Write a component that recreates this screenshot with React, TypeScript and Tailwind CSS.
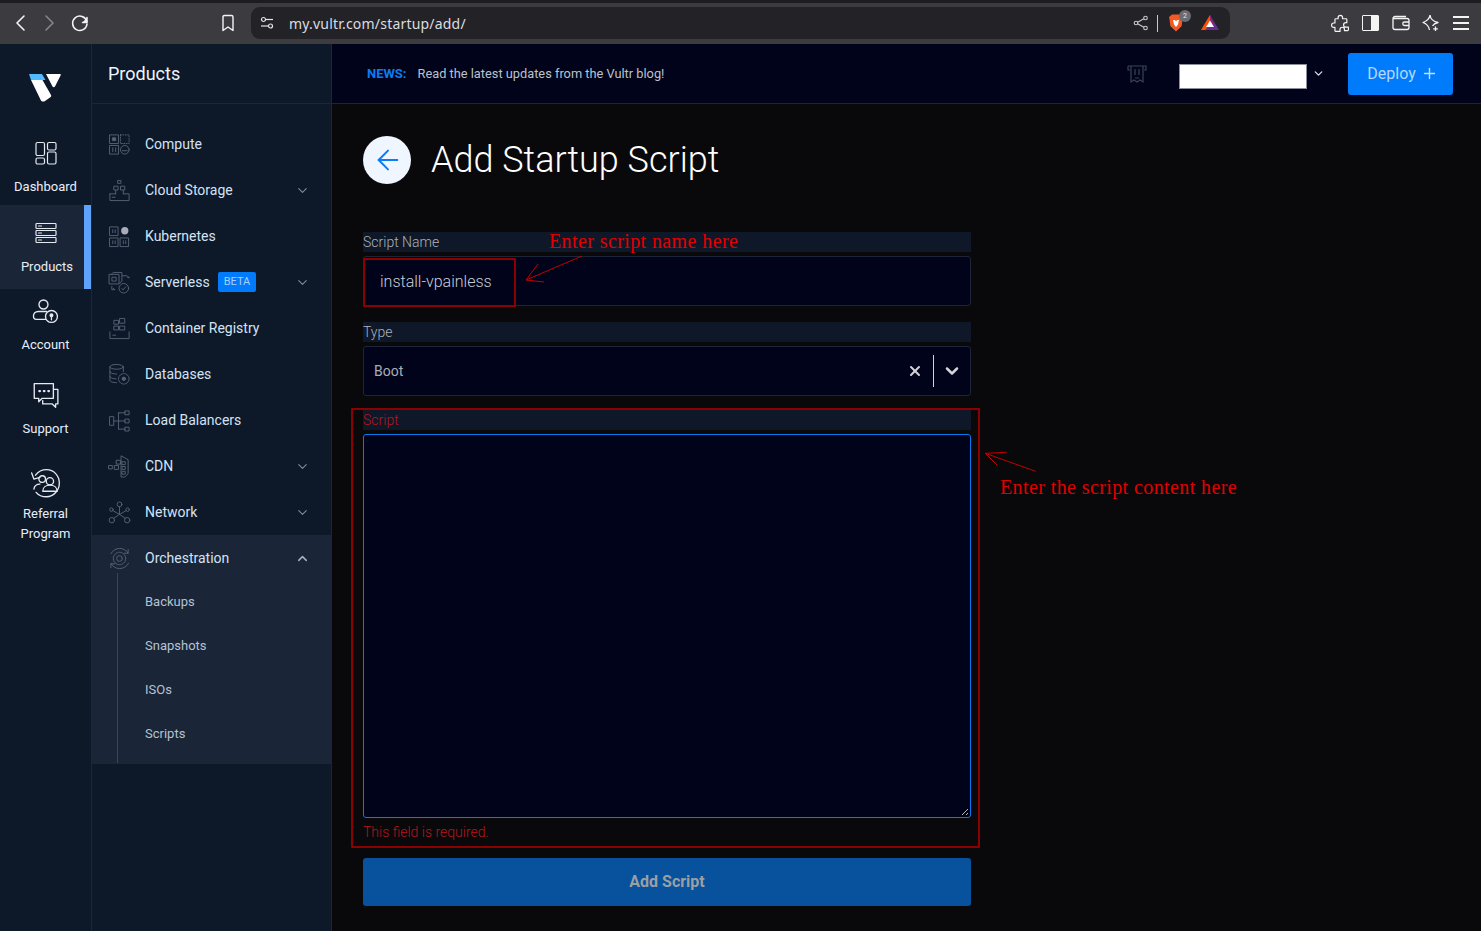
import type { ReactNode } from "react";
import { ArrowLeft, ChevronDown, ChevronUp, Plus, X } from "lucide-react";

const RAIL_STROKE = "#e5e9f0";
const NAV_STROKE = "#566173";

function Svg({ size, color, children, vb = 24, sw = 1.2 }: { size: number; color: string; children: ReactNode; vb?: number; sw?: number }) {
  return (
    <svg width={size} height={size} viewBox={`0 0 ${vb} ${vb}`} fill="none" stroke={color} strokeWidth={sw} strokeLinecap="round" strokeLinejoin="round">
      {children}
    </svg>
  );
}

function VultrLogo() {
  return (
    <svg width="33" height="29" viewBox="0 0 33 29">
      <path d="M1 1h13l3.500 6H3z" fill="#51b9ff" />
      <path d="M3 7h11.500l8.500 15c.4.8.2 1.500-.3 2l-5.700 4c-1.500 1-3.500.6-4.300-1z" fill="#fff" />
      <path d="M18 1h14c.6 0 1 .6.7 1.300L27 13.500c-.5 1-2 1-2.500 0z" fill="#fff" />
    </svg>
  );
}

const railIcons: Record<string, ReactNode> = {
  Dashboard: (
    <>
      <rect x="2" y="1.500" width="8.500" height="13" rx="1.500" />
      <rect x="13.500" y="1.500" width="8.500" height="7.500" rx="1.500" />
      <rect x="2" y="17" width="8.500" height="6" rx="1.500" />
      <rect x="13.500" y="11" width="8.500" height="12" rx="1.500" />
    </>
  ),
  Products: (
    <>
      <rect x="2" y="2.500" width="20" height="5" rx="0.800" />
      <rect x="2" y="9.500" width="20" height="5" rx="0.800" />
      <rect x="2" y="16.500" width="20" height="5" rx="0.800" />
      <path d="M4.500 5h3M4.500 12h3M4.500 19h3" />
    </>
  ),
  Account: (
    <>
      <circle cx="10.200" cy="5.800" r="4" />
      <path d="M13 12H5.500c-2.500 0-4.200 1.800-4.200 4 0 1.800 1 3 2.500 3H12" />
      <circle cx="17.300" cy="16.400" r="5.300" />
      <circle cx="17.300" cy="15.400" r="1.200" fill={RAIL_STROKE} />
      <path d="M17.300 16.400v3" />
    </>
  ),
  Support: (
    <>
      <path d="M2 1.500h17v13H9l-3 3v-3H2z" />
      <path d="M19.500 6.500h3.500v13h-2v3l-3-3H9.500v-3" />
      <path d="M6.500 8h.6M10.500 8h.6M14.500 8h.6" strokeWidth={2} />
    </>
  ),
  Referral: (
    <>
      <path d="M5 6.500C7.500 3 11 1.500 15 1.500c6.500 0 11.500 5.500 11.500 12S21.500 26 15 26c-4 0-7.500-1.500-9.500-4" />
      <path d="M1.500 4.500l2 5.500 5.500-1.500" />
      <circle cx="11" cy="10" r="3" />
      <circle cx="18" cy="12" r="3.300" />
      <path d="M3.500 19c.5-3 3-4.500 5.500-4.500M11.500 21c0-3.500 3-5.500 6.500-5.500s6.500 2 6.500 5.500z" />
    </>
  ),
};

function RailItem({ label, icon, active, iconSize, pad, labelGap, vb }: { label: ReactNode; icon: string; active?: boolean; iconSize: number; pad: string; labelGap: string; vb?: number }) {
  return (
    <div className={`relative flex flex-col items-center ${pad} ${active ? "bg-[#1a2537]" : ""}`}>
      <Svg size={iconSize} color={RAIL_STROKE} vb={vb}>
        {railIcons[icon]}
      </Svg>
      <div className={`text-center text-[13px] leading-[20px] text-[#e8eef7] ${labelGap} ${active ? "pl-[3px]" : ""}`}>{label}</div>
      {active ? <div className="absolute right-0 top-0 h-full w-[7px] bg-[#5da3fc]" /> : null}
    </div>
  );
}

const navIcons: Record<string, ReactNode> = {
  Compute: (
    <>
      <rect x="2" y="2" width="9" height="9" />
      <rect x="13" y="2" width="9" height="9" strokeDasharray="1 1.500" />
      <rect x="2" y="13" width="9" height="9" />
      <circle cx="17.500" cy="17.500" r="4.500" />
      <rect x="5" y="5" width="3" height="3" fill={NAV_STROKE} />
      <path d="M5 15.500v4M8 15.500v4M15 18.500h5" />
    </>
  ),
  Storage: (
    <>
      <rect x="10.500" y="1.500" width="3" height="3" />
      <rect x="6.500" y="7.500" width="4" height="4" />
      <rect x="13.500" y="7.500" width="4" height="4" />
      <path d="M2 15.500h6M16 15.500h6v7H2v-7" />
      <path d="M8 12v3.500M16 12v3.500M4.500 19h3" />
    </>
  ),
  Kubernetes: (
    <>
      <rect x="2" y="2" width="8.500" height="9" />
      <rect x="2" y="13.500" width="8.500" height="9" />
      <rect x="13" y="13.500" width="8.500" height="9" />
      <path d="M5 5v3M7.500 5v3M5 16.500v3M7.500 16.500v3M16 16.500v3M18.500 16.500v3" />
      <circle cx="17.500" cy="6" r="3.800" fill="#a6adb9" stroke="none" />
    </>
  ),
  Serverless: (
    <>
      <rect x="1.500" y="3.500" width="10" height="10" />
      <path d="M3.500 3.500l2-2h9v9l-2.500 2.500M4.500 6.500h4v4h-4z" />
      <path d="M15 5h5l2 2M22 7l-1.500-.2M4 16v3.500h3M7 19.500l-1.500-1.500" />
      <circle cx="16.500" cy="18" r="5" />
      <path d="M14.500 18.500l1.500 1 2.500-3" />
    </>
  ),
  Registry: (
    <>
      <rect x="12.500" y="1.500" width="5" height="5" />
      <rect x="6.500" y="3.500" width="4.500" height="4" />
      <rect x="6.500" y="9.500" width="4.500" height="4" />
      <rect x="12.500" y="9.500" width="5" height="4" />
      <path d="M2 15.500v7h20v-7" />
      <path d="M5 19h3" />
    </>
  ),
  Databases: (
    <>
      <ellipse cx="9" cy="4" rx="7" ry="2.500" />
      <path d="M2 4v14c0 1.500 3 2.500 7 2.500M16 4v5M2 9c0 1.500 3 2.500 7 2.500M2 14c0 1.500 3 2.500 6.500 2.500" />
      <circle cx="16.500" cy="16.500" r="5.500" strokeDasharray="3 1" />
      <circle cx="16.500" cy="16.500" r="1.800" fill={NAV_STROKE} />
    </>
  ),
  Balancers: (
    <>
      <rect x="2" y="8" width="4" height="9" />
      <rect x="18" y="2" width="4" height="4" />
      <rect x="18" y="10.500" width="4" height="4" />
      <rect x="18" y="19" width="4" height="4" />
      <path d="M6 12.500h12M11 4v17M11 4h7M11 21h7" />
    </>
  ),
  CDN: (
    <>
      <path d="M14 1l7 4v14.500L17.500 23H14z" />
      <rect x="9" y="5.500" width="4" height="4" />
      <rect x="1" y="11" width="3.500" height="3.500" />
      <rect x="7" y="11" width="4" height="4" />
      <rect x="15" y="7" width="3" height="3" />
      <rect x="15" y="12" width="3" height="3" />
      <rect x="15" y="17" width="3" height="3" />
    </>
  ),
  Network: (
    <>
      <circle cx="12" cy="3.500" r="2.500" />
      <circle cx="3.500" cy="9" r="1.800" />
      <circle cx="20.500" cy="9" r="1.800" />
      <circle cx="4" cy="20" r="2.800" />
      <circle cx="20" cy="20" r="2.800" />
      <path d="M12 6v8M5 10l7 4 7-4M6 18l6-4 6 4" />
    </>
  ),
  Orchestration: (
    <>
      <path d="M3 7C5 3.500 8.500 1.500 12 1.500c4 0 7 1.800 9 5M21.500 17c-2 3.500-5.500 5.500-9.500 5.500s-7-2-9-5.500" />
      <path d="M21 2.500v4h-4M3 21.500v-4h4" />
      <circle cx="12" cy="12" r="6.500" strokeDasharray="3 1" />
      <circle cx="12" cy="12" r="3" />
    </>
  ),
};

function NavItem({ label, icon, chevron, beta, open }: { label: string; icon: string; chevron?: boolean; beta?: boolean; open?: boolean }) {
  return (
    <div className={`flex h-[46px] items-center pl-[16px] pr-[21px] ${open ? "bg-[#1a2537]" : ""}`}>
      <div className="w-[37px]">
        <Svg size={23} color={NAV_STROKE} sw={1}>
          {navIcons[icon]}
        </Svg>
      </div>
      <span className="text-[14px] text-[#d3e3f5]">{label}</span>
      {beta ? <span className="ml-[8px] flex h-[20px] items-center rounded-[2px] bg-[#007bfc] px-[6px] text-[11px] text-[#a6cffb]">BETA</span> : null}
      <div className="flex-1" />
      {chevron ? <ChevronDown size={15} color="#7f8a9b" strokeWidth={1.800} /> : null}
      {open ? <ChevronUp size={15} color="#a5aebb" strokeWidth={2.500} /> : null}
    </div>
  );
}

function FieldLabel({ children, error }: { children: ReactNode; error?: boolean }) {
  return <div className={`h-[20px] bg-[#0e1829] text-[14px] font-light leading-[20px] ${error ? "text-[#b5161e]" : "text-[#aeb3ba]"}`}>{children}</div>;
}

export default function App() {
  return (
    <div className="relative flex h-[931px] w-[1481px] flex-col overflow-hidden bg-[#09090b] font-['Roboto',sans-serif]">
      {/* browser chrome */}
      <div className="h-[44px] border-t-[3px] border-[#1d1c20] bg-[#3c3b40]">
        <div className="flex h-[40px] items-center">
          <svg className="ml-[14px]" width="12" height="18" viewBox="0 0 12 18" fill="none" stroke="#f4f4f5" strokeWidth="1.600" strokeLinecap="round" strokeLinejoin="round"><path d="M10 2L3 9l7 7" /></svg>
          <svg className="ml-[18px]" width="12" height="18" viewBox="0 0 12 18" fill="none" stroke="#85858a" strokeWidth="1.600" strokeLinecap="round" strokeLinejoin="round"><path d="M2 2l7 7-7 7" /></svg>
          <svg className="ml-[14px]" width="20" height="20" viewBox="0 0 20 20" fill="none" stroke="#f4f4f5" strokeWidth="1.500" strokeLinecap="round"><path d="M16.800 8.500A7.200 7.200 0 1 0 17 11" /><path d="M17 4.500v5h-4.500" fill="#f4f4f5" /></svg>
          <svg className="ml-[131px]" width="14" height="18" viewBox="0 0 14 18" fill="none" stroke="#f4f4f5" strokeWidth="1.400" strokeLinejoin="round"><path d="M2 3c0-1 .6-1.500 1.500-1.500h7c.9 0 1.500.5 1.500 1.500v13.500l-5-3.500-5 3.500z" /></svg>
          <div className="ml-[16px] flex h-[32px] w-[979px] items-center rounded-[9px] bg-[#232327]">
            <svg className="ml-[9px]" width="14" height="14" viewBox="0 0 14 14" fill="none" stroke="#e4e4e7" strokeWidth="1.200"><circle cx="3.500" cy="3.500" r="2" /><path d="M6 3.500h7" /><circle cx="10.500" cy="10" r="2" /><path d="M1 10h7" /></svg>
            <span className="ml-[15px] font-['Noto_Sans',sans-serif] text-[14px] tracking-[0.2px] text-[#dcdce0]">my.vultr.com/startup/add/</span>
            <div className="flex-1" />
            <svg width="16" height="16" viewBox="0 0 16 16" fill="none" stroke="#c9c9cd" strokeWidth="1.100"><circle cx="12.500" cy="3" r="1.800" /><circle cx="12.500" cy="13" r="1.800" /><circle cx="3" cy="8" r="1.800" /><path d="M4.600 7.200l6.300-3.400M4.600 8.800l6.300 3.400" /></svg>
            <div className="ml-[8px] h-[17px] w-px bg-[#c9c9cd]" />
            <div className="relative ml-[10px]">
              <svg width="16" height="18" viewBox="0 0 16 18"><path d="M1 3l3-2.500h8L15 3l-.5 2-.8 7L8 17.500 2.300 12l-.8-7z" fill="#f15a22" /><path d="M5 6h2l1 1.500L9 6h2l-1 4.500L8 13l-2-2.500z" fill="#fff" /></svg>
              <div className="absolute -right-[7px] -top-[4px] flex h-[12px] w-[12px] items-center justify-center rounded-full bg-[#6b6b73] text-[7px] text-[#e4e4e7]">2</div>
            </div>
            <svg className="ml-[17px] mr-[11px]" width="18" height="16" viewBox="0 0 18 16"><path d="M9 0l9 15H0z" fill="#662d91" /><path d="M9 0L0 15h4.500L9 7z" fill="#ff5000" /><path d="M9 0v5l4.500 7L9 0z" fill="#9e1f63" /><path d="M9 5.500L13 12H5z" fill="#fff" /></svg>
          </div>
          <svg className="ml-[101px]" width="19" height="19" viewBox="0 0 24 24" fill="none" stroke="#f4f4f5" strokeWidth="1.500" strokeLinejoin="round"><path d="M9 4.500a2.800 2.800 0 0 1 5.600 0V6H19a1 1 0 0 1 1 1v4h-1.300a2.800 2.800 0 0 0 0 5.600H22v3.400a1 1 0 0 1-1 1h-4v-1.500a2.800 2.800 0 0 0-5.600 0V22H6a1 1 0 0 1-1-1v-4H3.500a2.800 2.800 0 0 1 0-5.600H5V7a1 1 0 0 1 1-1h3z" /></svg>
          <div className="ml-[12px] flex h-[16px] w-[17px] rounded-[1px] border-[1.500px] border-[#f4f4f5]"><div className="ml-auto w-[7px] bg-[#f4f4f5]" /></div>
          <svg className="ml-[13px]" width="18" height="16" viewBox="0 0 18 16" fill="none" stroke="#f4f4f5" strokeWidth="1.300"><path d="M14 1.500H3A2 2 0 0 0 1 3.500v9A2 2 0 0 0 3 14.500h12a2 2 0 0 0 2-2v-7a2 2 0 0 0-2-2H1" /><path d="M17 7h-4.500a1.500 1.500 0 0 0 0 3.500H17" /></svg>
          <svg className="ml-[12px]" width="18" height="18" viewBox="0 0 18 18" fill="none" stroke="#f4f4f5" strokeWidth="1.300" strokeLinejoin="round"><path d="M8 1c.5 4 3 6.500 8 7.500-3 .8-4.500 1.800-5.500 3.500M7.500 16C7 12.500 5 10 1 8.500 5 7 7.500 5 8 1" /><path d="M13.500 12.500v4.500M11.200 14.800h4.600" /></svg>
          <div className="ml-[13px] flex w-[16px] flex-col gap-[4px]"><div className="h-[2px] bg-[#f4f4f5]" /><div className="h-[2px] bg-[#f4f4f5]" /><div className="h-[2px] bg-[#f4f4f5]" /></div>
        </div>
      </div>

      <div className="flex flex-1">
        {/* icon rail */}
        <div className="w-[92px] border-r border-[#1b2638] bg-[#0d1829]">
          <div className="flex h-[58px] items-end justify-center pr-[2px]"><VultrLogo /></div>
          <RailItem label="Dashboard" icon="Dashboard" iconSize={24} pad="pt-[39px] pb-[8px]" labelGap="mt-[12px]" />
          <RailItem label="Products" icon="Products" iconSize={24} active pad="pt-[16px] pb-[12px]" labelGap="mt-[12px]" />
          <RailItem label="Account" icon="Account" iconSize={27} pad="pt-[9px] pb-[9px]" labelGap="mt-[10px]" />
          <RailItem label="Support" icon="Support" iconSize={27} pad="pt-[18px]" labelGap="mt-[10px]" />
          <RailItem label={<>Referral<br />Program</>} icon="Referral" iconSize={31} pad="pt-[29px]" labelGap="mt-[5px]" vb={28} />
        </div>

        {/* products panel */}
        <div className="w-[240px] border-r border-[#1b2638] bg-[#0d1829]">
          <div className="flex h-[60px] items-center border-b border-[#1b2638] pl-[16px] text-[18px] text-[#edf4fc]">Products</div>
          <div className="pt-[17px]">
            <NavItem label="Compute" icon="Compute" />
            <NavItem label="Cloud Storage" icon="Storage" chevron />
            <NavItem label="Kubernetes" icon="Kubernetes" />
            <NavItem label="Serverless" icon="Serverless" chevron beta />
            <NavItem label="Container Registry" icon="Registry" />
            <NavItem label="Databases" icon="Databases" />
            <NavItem label="Load Balancers" icon="Balancers" />
            <NavItem label="CDN" icon="CDN" chevron />
            <NavItem label="Network" icon="Network" chevron />
            <div className="bg-[#1a2537] pb-[1px]">
              <NavItem label="Orchestration" icon="Orchestration" open />
              <div className="ml-[25px] -mt-[8px] border-l border-[#3a4556] pb-[7px] pl-[27px] pt-[7px]">
                {["Backups", "Snapshots", "ISOs", "Scripts"].map((s) => (
                  <div key={s} className="flex h-[44px] items-center text-[13px] text-[#b4c2d3]">{s}</div>
                ))}
              </div>
            </div>
          </div>
        </div>

        {/* main */}
        <div className="flex-1">
          <div className="flex h-[60px] items-center border-b border-[#1b2638] bg-[#01031a] pl-[35px] pr-[28px]">
            <span className="text-[13px] font-bold text-[#0a7cf5]">NEWS:</span>
            <span className="ml-[11px] text-[12.800px] text-[#b9c2cd]">Read the latest updates from the Vultr blog!</span>
            <div className="flex-1" />
            <svg width="20" height="20" viewBox="0 0 20 20" fill="none" stroke="#3a4354" strokeWidth="1.200"><path d="M1 2h18v4h-2M1 2v4h2M4 2v16l3-2 3 2 3-2 3 2V2M8 5v6M12 5v6M8 14h4" /></svg>
            <div className="ml-[32px] mt-[6px] h-[25px] w-[128px] border border-[#8a8f99] bg-white" />
            <ChevronDown className="ml-[5px]" size={13} color="#d6dde6" strokeWidth={2.500} />
            <div className="ml-[23px] flex h-[42px] w-[105px] items-center justify-center gap-[5px] rounded-[3px] bg-[#007bfc] pl-[4px] text-[16px] text-[#b4d7fb]">
              Deploy <Plus size={17} color="#c3defb" strokeWidth={2} />
            </div>
          </div>

          <div className="w-[671px] pl-[31px] pr-[32px] pt-[29px]">
            <div className="flex items-center">
              <div className="flex h-[48px] w-[48px] items-center justify-center rounded-full bg-[#f0f6ff] pl-[1px]"><ArrowLeft size={32} color="#0a7cf5" strokeWidth={1.500} /></div>
              <h1 className="ml-[20px] text-[36px] font-light text-white">Add Startup Script</h1>
            </div>

            <div className="mt-[45px]">
              <FieldLabel>Script Name</FieldLabel>
              <div className="mt-[4px] flex h-[50px] items-center rounded-[3px] border border-[#1c2638] bg-[#01031a] pl-[16px] pt-[2px] text-[16px] font-light text-[#c9ced6]">install-vpainless</div>
            </div>
            <div className="mt-[16px]">
              <FieldLabel>Type</FieldLabel>
              <div className="mt-[4px] flex h-[50px] items-center rounded-[3px] border border-[#1c2638] bg-[#01031a] pl-[10px] text-[14px] text-[#a9aeb6]">
                Boot
                <div className="flex-1" />
                <X size={16} color="#d4d4d8" strokeWidth={3} />
                <div className="ml-[10px] h-[32px] w-px bg-[#d4d4d8]" />
                <ChevronDown className="ml-[8px] mr-[8px]" size={20} color="#d4d4d8" strokeWidth={3} />
              </div>
            </div>
            <div className="mt-[14px]">
              <FieldLabel error>Script</FieldLabel>
              <div className="relative mt-[4px] h-[384px] rounded-[3px] border border-[#0a78ee] bg-[#01031a]">
                <svg className="absolute bottom-[1px] right-[1px]" width="8" height="8" viewBox="0 0 8 8" stroke="#b8b8b8"><path d="M1 7l6-6M5 7l2-2" /></svg>
              </div>
              <div className="mt-[4px] h-[20px] text-[14px] font-light leading-[20px] text-[#b5161e]">This field is required.</div>
            </div>
            <div className="mt-[16px] flex h-[48px] items-center justify-center rounded-[3px] bg-[#07519d] text-[16px] font-bold text-[#9c9fa3]">Add Script</div>
          </div>
        </div>
      </div>

      {/* red annotations drawn over the screenshot */}
      <div className="absolute left-[363px] top-[258px] h-[49px] w-[153px] rounded-[1px] border-2 border-[#8b0000]" />
      <div className="absolute left-[351px] top-[408px] h-[440px] w-[629px] rounded-[1px] border-2 border-[#8b0000]" />
      <div className="absolute left-[549px] top-[226px] font-['Liberation_Serif',serif] text-[20px] tracking-[0.4px] text-[#e00000]">Enter script name here</div>
      <div className="absolute left-[1000px] top-[472px] font-['Liberation_Serif',serif] text-[20px] tracking-[0.4px] text-[#e00000]">Enter the script content here</div>
      <svg className="absolute left-[520px] top-[252px]" width="70" height="35" viewBox="0 0 70 35" fill="none" stroke="#c00000" strokeWidth="1"><path d="M62 4L6 28M6 28l12-16M6 28l18 2" /></svg>
      <svg className="absolute left-[980px] top-[448px]" width="60" height="28" viewBox="0 0 60 28" fill="none" stroke="#c00000" strokeWidth="1"><path d="M5.300 5.300L55.700 23.300M5.300 5.300L26.700 4.300M5.300 5.300L17 17" /></svg>
    </div>
  );
}
